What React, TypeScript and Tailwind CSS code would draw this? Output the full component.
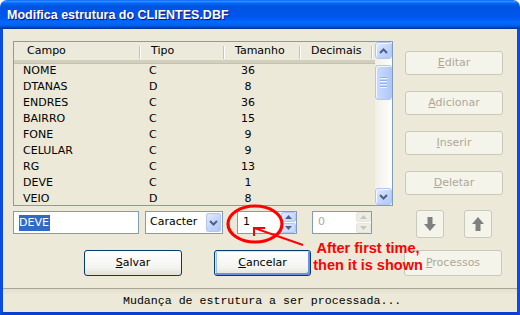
import React from "react";

const rows: [string, string, string][] = [
  ["NOME", "C", "36"],
  ["DTANAS", "D", "8"],
  ["ENDRES", "C", "36"],
  ["BAIRRO", "C", "15"],
  ["FONE", "C", "9"],
  ["CELULAR", "C", "9"],
  ["RG", "C", "13"],
  ["DEVE", "C", "1"],
  ["VEIO", "D", "8"],
];

function Chevron({ up, color = "#4d6185" }: { up?: boolean; color?: string }) {
  return (
    <svg width="9" height="6" viewBox="0 0 9 6">
      <polyline
        points={up ? "1,5 4.5,1.5 8,5" : "1,1 4.5,4.5 8,1"}
        fill="none"
        stroke={color}
        strokeWidth="2"
      />
    </svg>
  );
}

function SmallTri({ up, color }: { up?: boolean; color: string }) {
  return (
    <svg width="7" height="4" viewBox="0 0 7 4">
      <polygon points={up ? "0,4 3.5,0 7,4" : "0,0 3.5,4 7,0"} fill={color} />
    </svg>
  );
}

function XpScrollBtn({ up }: { up?: boolean }) {
  return (
    <div className="h-[17px] w-[17px] rounded-[3px] border border-[#b3c6f3] bg-[linear-gradient(135deg,#e1eafe,#c1d3fb_60%,#b4c8f6)] shadow-[inset_1px_1px_0_#f4f7ff] flex items-center justify-center">
      <Chevron up={up} />
    </div>
  );
}

function DisabledBtn({ label, w = "w-[98px]", h = "h-[24px]" }: { label: string; w?: string; h?: string }) {
  return (
    <div
      className={`${w} ${h} rounded-[3px] border border-[#cac8bb] bg-[#f5f4ea] flex items-center justify-center text-[#aca899]`}
    >
      <span>
        <span className="underline underline-offset-[1px]">{label[0]}</span>
        {label.slice(1)}
      </span>
    </div>
  );
}

function Arrow({ up }: { up?: boolean }) {
  return (
    <svg width="12" height="14" viewBox="0 0 12 14">
      <polygon
        points={
          up
            ? "6,0 12,7 8.5,7 8.5,14 3.5,14 3.5,7 0,7"
            : "6,14 12,7 8.5,7 8.5,0 3.5,0 3.5,7 0,7"
        }
        fill="#808080"
      />
    </svg>
  );
}

export default function App() {
  return (
    <div className="relative w-[520px] h-[315px] overflow-hidden bg-white flex flex-col font-['DejaVu_Sans',sans-serif] text-[11px] text-black">
      {/* Title bar */}
      <div className="h-[29px] shrink-0 rounded-t-[7px] flex items-center pl-[7px] bg-[linear-gradient(to_bottom,#0058ee_0%,#3593ff_4%,#288eff_6%,#127dff_8%,#036ffc_10%,#0262ee_14%,#0057e5_20%,#0054e3_24%,#0055eb_56%,#005bf5_66%,#026afe_76%,#0062ef_86%,#0052d6_92%,#0040ab_96%,#003092_100%)]">
        <span className="font-['Liberation_Sans',sans-serif] font-bold text-[12.5px] text-white [text-shadow:1px_1px_#0f1089] pt-[1px]">
          Modifica estrutura do CLIENTES.DBF
        </span>
      </div>

      {/* Body */}
      <div className="flex-1 flex flex-col bg-[#ece9d8] border-x-[3px] border-b-[3px] border-x-[#0b4de2] border-b-[#0a3fd0]">
        <div className="flex pt-[12px] pl-[10px]">
          {/* List */}
          <div className="w-[380px] h-[165px] border border-[#7f9db9] flex overflow-hidden">
            <div className="flex-1 flex flex-col overflow-hidden">
              <div className="h-[21px] shrink-0 flex bg-[#ebeadb] border-b-[3px] border-[#d2cfbf] shadow-[0_1px_0_#c4c1b0]">
                {[
                  ["Campo", "w-[127px] pl-[13px]"],
                  ["Tipo", "w-[84px] pl-[10px]"],
                  ["Tamanho", "w-[76px] pl-[10px]"],
                  ["Decimais", "w-[72px] pl-[10px]"],
                ].map(([t, c]) => (
                  <div key={t} className={`${c} relative flex items-center`}>
                    {t}
                    <div className="absolute right-0 top-[4px] h-[13px] w-[2px] border-l border-[#c7c5b2] border-r border-r-white" />
                  </div>
                ))}
              </div>
              <div className="flex flex-col">
                {rows.map(([a, b, c]) => (
                  <div key={a} className="h-[16px] shrink-0 flex items-center">
                    <div className="w-[127px] pl-[9px]">{a}</div>
                    <div className="w-[84px] pl-[8px]">{b}</div>
                    <div className="w-[76px] pl-[10px]">
                      <div className="w-[26px] text-center">{c}</div>
                    </div>
                  </div>
                ))}
              </div>
            </div>
            {/* Scrollbar */}
            <div className="w-[17px] flex flex-col bg-[linear-gradient(to_right,#f1efe6,#fefefe)]">
              <XpScrollBtn up />
              <div className="mt-[6px] h-[35px] w-[17px] rounded-[3px] border border-[#b3c6f3] bg-[linear-gradient(to_right,#cddbfc,#bcd0fa_60%,#b2c6f5)] shadow-[inset_1px_1px_0_#f4f7ff] flex flex-col items-center justify-center gap-[1px]">
                {[0, 1, 2, 3].map((i) => (
                  <div key={i} className="w-[7px] h-[1px] bg-[#8fb0f5] shadow-[0_1px_0_#eef4fe] mb-[1px]" />
                ))}
              </div>
              <div className="flex-1" />
              <XpScrollBtn />
            </div>
          </div>

          {/* Right buttons */}
          <div className="ml-[12px] pt-[10px] flex flex-col gap-[16px]">
            <DisabledBtn label="Editar" />
            <DisabledBtn label="Adicionar" />
            <DisabledBtn label="Inserir" />
            <DisabledBtn label="Deletar" />
          </div>
        </div>

        {/* Edit row */}
        <div className="mt-[4px] h-[28px] flex items-start pl-[10px]">
          <div className="mt-[1px] w-[126px] h-[23px] border border-[#7f9db9] bg-white flex items-center pl-[5px]">
            <span className="bg-[#316ac5] text-white leading-[16px] pr-[1px]">DEVE</span>
          </div>
          <div className="ml-[6px] mt-[1px] w-[78px] h-[23px] border border-[#7f9db9] bg-white flex items-center">
            <span className="pl-[4px] flex-1">Caracter</span>
            <div className="w-[15px] h-[19px] mr-[1px] rounded-[2px] border border-[#b3c6f3] bg-[linear-gradient(135deg,#e1eafe,#c1d3fb_60%,#b4c8f6)] flex items-center justify-center">
              <Chevron />
            </div>
          </div>
          <div className="ml-[14px] mt-[1px] w-[60px] h-[23px] border border-[#7f9db9] bg-white flex items-center">
            <span className="pl-[5px] flex-1">1</span>
            <div className="w-[15px] h-[21px] flex flex-col">
              <div className="h-[10px] mb-[1px] rounded-[2px] border border-[#b3c6f3] bg-[linear-gradient(135deg,#e1eafe,#c1d3fb)] flex items-center justify-center">
                <SmallTri up color="#4d6185" />
              </div>
              <div className="h-[10px] rounded-[2px] border border-[#b3c6f3] bg-[linear-gradient(135deg,#e1eafe,#c1d3fb)] flex items-center justify-center">
                <SmallTri color="#4d6185" />
              </div>
            </div>
          </div>
          <div className="ml-[15px] mt-[1px] w-[60px] h-[23px] border border-[#7f9db9] bg-white flex items-center">
            <span className="pl-[5px] flex-1 text-[#aca899]">0</span>
            <div className="w-[15px] h-[21px] flex flex-col">
              <div className="h-[10px] mb-[1px] rounded-[2px] border border-[#e8e6dc] bg-[#eeede5] flex items-center justify-center">
                <SmallTri up color="#c9c7ba" />
              </div>
              <div className="h-[10px] rounded-[2px] border border-[#e8e6dc] bg-[#eeede5] flex items-center justify-center">
                <SmallTri color="#c9c7ba" />
              </div>
            </div>
          </div>
          <div className="ml-[44px] w-[28px] h-[28px] rounded-[3px] border border-[#cac8bb] bg-[#f5f4ea] flex items-center justify-center">
            <Arrow />
          </div>
          <div className="ml-[20px] w-[28px] h-[28px] rounded-[3px] border border-[#cac8bb] bg-[#f5f4ea] flex items-center justify-center">
            <Arrow up />
          </div>
        </div>

        {/* Buttons row */}
        <div className="mt-[12px] h-[26px] flex pl-[10px]">
          <div className="ml-[71px] w-[98px] h-[26px] rounded-[3px] border border-[#003c74] bg-[linear-gradient(to_bottom,#ffffff,#f3f3ef_70%,#e2e0d4)] flex items-center justify-center">
            <span>
              <span className="underline underline-offset-[1px]">S</span>alvar
            </span>
          </div>
          <div className="ml-[32px] w-[97px] h-[26px] rounded-[3px] border border-[#003c74] bg-[linear-gradient(to_bottom,#ffffff,#f3f3ef_70%,#e2e0d4)] shadow-[inset_1px_1px_0_#cee7ff,inset_-2px_-2px_0_#6d8ee4,inset_2px_0_0_#9fbcf5] flex items-center justify-center">
            <span>
              <span className="underline underline-offset-[1px]">C</span>ancelar
            </span>
          </div>
          <div className="ml-[93px]">
            <DisabledBtn label="Processos" h="h-[26px]" />
          </div>
        </div>

        {/* Status bar */}
        <div className="mt-[12px] flex-1 border-t border-[#a8a594] bg-[linear-gradient(to_bottom,#e3e0d1,#ece9d8_6px)] flex items-center pl-[120px] font-['Liberation_Mono',monospace] text-[11.6px]">
          Mudança de estrutura a ser processada...
        </div>
      </div>

      {/* Red annotation overlay */}
      <svg className="absolute left-0 top-0 pointer-events-none" width="520" height="315">
        <ellipse cx="255" cy="224" rx="27" ry="18" fill="none" stroke="#ff0000" strokeWidth="3.2" />
        <line x1="303" y1="245" x2="254" y2="228" stroke="#ff0000" strokeWidth="2" />
        <polyline points="265,228 254,228 254,236" fill="none" stroke="#ff0000" strokeWidth="2" />
      </svg>
      <div className="absolute left-[298px] top-[240px] w-[140px] text-center font-['Liberation_Sans',sans-serif] font-bold text-[14.5px] leading-[17px] text-[#ff0000]">
        After first time,
        <br />
        then it is shown
      </div>
    </div>
  );
}
